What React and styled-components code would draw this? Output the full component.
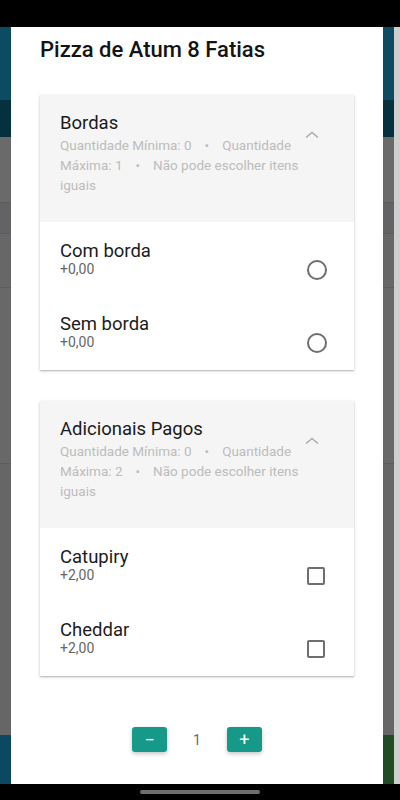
import React from "react";
import styled, { createGlobalStyle } from "styled-components";

const groups = [
  {
    id: "bordas",
    title: "Bordas",
    min: 0,
    max: 1,
    kind: "radio",
    items: [
      { id: "com", name: "Com borda", price: "+0,00" },
      { id: "sem", name: "Sem borda", price: "+0,00" },
    ],
  },
  {
    id: "adicionais",
    title: "Adicionais Pagos",
    min: 0,
    max: 2,
    kind: "check",
    items: [
      { id: "catupiry", name: "Catupiry", price: "+2,00" },
      { id: "cheddar", name: "Cheddar", price: "+2,00" },
    ],
  },
];

const GlobalStyle = createGlobalStyle`
  html, body {
    margin: 0;
    padding: 0;
    background: #000;
  }
  body {
    font-family: Roboto, "Noto Sans", Arial, sans-serif;
  }
  * { box-sizing: border-box; }
`;

const ChevronUp = () => (
  <svg width="24" height="24" viewBox="0 0 24 24">
    <path d="M6 13.5 L12 8.5 L18 13.5" fill="none" stroke="#acacac" strokeWidth="1.6" />
  </svg>
);

const Option = ({ item, kind }) => (
  <Row>
    <Label>
      <Name>{item.name}</Name>
      <Price>{item.price}</Price>
    </Label>
    {kind === "radio" ? <RadioMark /> : <CheckMark />}
  </Row>
);

const Group = ({ group }) => (
  <Card>
    <Summary>
      <Info>
        <GroupTitle>{group.title}</GroupTitle>
        <Rules>
          Quantidade Mínima: {group.min}
          <Dot>•</Dot>
          Quantidade Máxima: {group.max}
          <Dot>•</Dot>
          Não pode escolher itens iguais
        </Rules>
      </Info>
      <IconBox>
        <ChevronUp />
      </IconBox>
    </Summary>
    <Options>
      {group.items.map((item) => (
        <Option key={item.id} item={item} kind={group.kind} />
      ))}
    </Options>
  </Card>
);

const sideBands = [
  { h: 73, c: "#0c4c62" },
  { h: 37, c: "#05313f" },
  { h: 65, c: "#6a6a6a" },
  { h: 31, c: "#636366", line: true },
  { h: 54, c: "#676767", line: true },
  { h: 176, c: "#686868", line: true },
  { h: 272, c: "#666666", line: true },
];

const Side = ({ right }) => (
  <Backdrop $right={right}>
    {sideBands.map((b, i) => (
      <Band key={i} $h={b.h} $c={b.c} $line={b.line} />
    ))}
    <Band $h={49} $c={right ? "#1f4c22" : "#0b4862"} />
  </Backdrop>
);

const App = () => {
  const [qty, setQty] = React.useState(1);

  return (
    <Screen>
      <GlobalStyle />
      <StatusBar />
      <Middle>
        <Side />
        <Modal>
          <Title>Pizza de Atum 8 Fatias</Title>
          <Groups>
            {groups.map((g) => (
              <Group key={g.id} group={g} />
            ))}
          </Groups>
          <Quantity>
            <QtyButton onClick={() => setQty(Math.max(1, qty - 1))}>−</QtyButton>
            <Count>{qty}</Count>
            <QtyButton onClick={() => setQty(qty + 1)}>+</QtyButton>
          </Quantity>
        </Modal>
        <Side right />
      </Middle>
      <NavBar>
        <HomePill />
      </NavBar>
    </Screen>
  );
};

const Screen = styled.div`
  width: 400px;
  height: 800px;
  display: flex;
  flex-direction: column;
  background: #000;
  overflow: hidden;
`;

const StatusBar = styled.div`
  height: 27px;
  flex-shrink: 0;
  background: #000;
`;

const Middle = styled.div`
  flex: 1;
  display: flex;
  min-height: 0;
`;

const Backdrop = styled.div`
  width: ${(p) => (p.$right ? "17px" : "11px")};
  display: flex;
  flex-direction: column;
  border-right: ${(p) => (p.$right ? "6px solid #cfcfcf" : "none")};
`;

const Band = styled.div`
  height: ${(p) => p.$h}px;
  flex-shrink: 0;
  background: ${(p) => p.$c};
  border-top: ${(p) => (p.$line ? "1px solid #5c5c5c" : "none")};
`;

const Modal = styled.div`
  width: 372px;
  background: #fff;
  display: flex;
  flex-direction: column;
  padding: 11px 29px 0;
`;

const Title = styled.h2`
  margin: 0;
  font-size: 22px;
  line-height: 24px;
  font-weight: 500;
  color: #141414;
`;

const Groups = styled.div`
  margin-top: 33px;
  display: flex;
  flex-direction: column;
  gap: 31px;
`;

const Card = styled.div`
  background: #fff;
  box-shadow: 0 1px 3px rgba(0, 0, 0, 0.2), 0 1px 1px rgba(0, 0, 0, 0.12);
`;

const Summary = styled.div`
  background: #f5f5f5;
  display: flex;
  align-items: flex-start;
  padding: 16px 0 27px 20px;
`;

const Info = styled.div`
  width: 246px;
`;

const GroupTitle = styled.div`
  font-size: 18.5px;
  line-height: 24px;
  color: #1a1a1a;
`;

const Rules = styled.div`
  font-size: 13.5px;
  line-height: 20px;
  color: #bcbcbc;
`;

const Dot = styled.span`
  margin: 0 13px;
`;

const IconBox = styled.div`
  width: 24px;
  height: 24px;
  margin-top: 13px;
  margin-left: -6px;
`;

const Options = styled.div`
  display: flex;
  flex-direction: column;
  padding-bottom: 2px;
`;

const Row = styled.div`
  display: flex;
  align-items: center;
  padding: 19px 27px 18px 20px;
`;

const Label = styled.div`
  flex: 1;
`;

const Name = styled.div`
  font-size: 18.5px;
  line-height: 20px;
  color: #1c1c1c;
`;

const Price = styled.div`
  font-size: 14px;
  line-height: 16px;
  color: #666;
`;

const RadioMark = styled.span`
  width: 20px;
  height: 20px;
  margin: 11px 0 -11px;
  border: 2px solid #6e6e6e;
  border-radius: 50%;
`;

const CheckMark = styled.span`
  width: 18px;
  height: 18px;
  margin: 11px 2px -11px 0;
  border: 2px solid #6e6e6e;
  border-radius: 2px;
`;

const Quantity = styled.div`
  margin-top: 51px;
  display: flex;
  justify-content: center;
  align-items: center;
  gap: 26px;
`;

const QtyButton = styled.button`
  width: 35px;
  height: 25px;
  border: none;
  border-radius: 3px;
  background: #17998a;
  color: #fff;
  font-family: Roboto, Arial, sans-serif;
  font-size: 18px;
  line-height: 25px;
  padding: 0;
  cursor: pointer;
  box-shadow: 0 2px 4px rgba(0, 0, 0, 0.22);
`;

const Count = styled.span`
  font-size: 14px;
  color: #6a6a6a;
`;

const NavBar = styled.div`
  height: 16px;
  flex-shrink: 0;
  background: #000;
  display: flex;
  justify-content: center;
  align-items: center;
`;

const HomePill = styled.div`
  width: 120px;
  height: 4px;
  border-radius: 2px;
  background: #6f6f6f;
`;

export default App;
